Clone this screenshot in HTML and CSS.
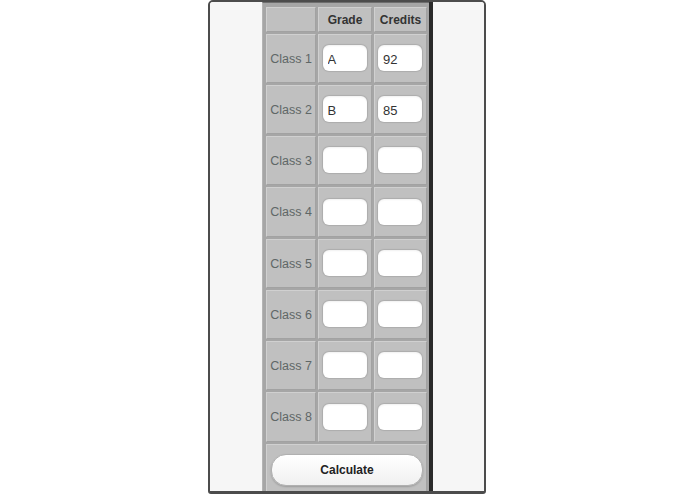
FILE: index.html
```html
<!DOCTYPE html>
<html>
<head>
<meta charset="utf-8">
<title>GPA Calculator</title>
<link rel="stylesheet" href="styles.css">
</head>
<body>
<div class="frame">
  <div class="side"></div>
  <div class="middle">
    <div class="grid">
      <div class="cell head"></div>
      <div class="cell head">Grade</div>
      <div class="cell head">Credits</div>

      <div class="cell label">Class 1</div>
      <div class="cell"><input class="field" type="text" value="A"></div>
      <div class="cell"><input class="field" type="text" value="92"></div>

      <div class="cell label">Class 2</div>
      <div class="cell"><input class="field" type="text" value="B"></div>
      <div class="cell"><input class="field" type="text" value="85"></div>

      <div class="cell label">Class 3</div>
      <div class="cell"><input class="field" type="text"></div>
      <div class="cell"><input class="field" type="text"></div>

      <div class="cell label">Class 4</div>
      <div class="cell"><input class="field" type="text"></div>
      <div class="cell"><input class="field" type="text"></div>

      <div class="cell label">Class 5</div>
      <div class="cell"><input class="field" type="text"></div>
      <div class="cell"><input class="field" type="text"></div>

      <div class="cell label">Class 6</div>
      <div class="cell"><input class="field" type="text"></div>
      <div class="cell"><input class="field" type="text"></div>

      <div class="cell label">Class 7</div>
      <div class="cell"><input class="field" type="text"></div>
      <div class="cell"><input class="field" type="text"></div>

      <div class="cell label">Class 8</div>
      <div class="cell"><input class="field" type="text"></div>
      <div class="cell"><input class="field" type="text"></div>

      <div class="cell foot"><button class="calc" type="button">Calculate</button></div>
    </div>
  </div>
  <div class="bar"></div>
  <div class="side"></div>
</div>
</body>
</html>
```
FILE: styles.css
```css
html, body {
  margin: 0;
  padding: 0;
  background: #ffffff;
  overflow: hidden;
}

body {
  font-family: "Liberation Sans", Arial, sans-serif;
}

.frame {
  margin-left: 208px;
  width: 278px;
  height: 494px;
  box-sizing: border-box;
  border: 2px solid #4c4c4c;
  border-bottom-width: 3px;
  border-radius: 5px 5px 3px 3px;
  display: flex;
  overflow: hidden;
  background: #f6f6f6;
}

.side {
  width: 52px;
  background: #f6f6f6;
}

.side:last-child {
  width: 51px;
}

.middle {
  width: 167px;
  box-sizing: border-box;
  background: #a6a6a6;
  border-top: 1px solid #6e6e6e;
  border-left: 1px solid #b4b4b4;
  padding: 4px 2px 0 3px;
}

.bar {
  width: 4px;
  background: #2a2a2a;
}

.grid {
  display: grid;
  grid-template-columns: 50px 54px 53px;
  grid-template-rows: 25px 49px 49px 49px 50px 49px 49px 49px 50px 60px;
  gap: 2px;
}

.cell {
  box-sizing: border-box;
  background: #c0c0c0;
  border: 1px solid;
  border-color: #d0d0d0 #a2a2a2 #a2a2a2 #d0d0d0;
  display: flex;
  align-items: center;
  justify-content: center;
}

.head {
  font-size: 12px;
  font-weight: bold;
  color: #333333;
  padding-top: 1px;
}

.label {
  font-size: 12.5px;
  color: #5f6767;
}

.field {
  box-sizing: border-box;
  width: 44px;
  height: 26px;
  margin: -1px 1px 0 0;
  border: none;
  border-radius: 6px;
  background: #ffffff;
  box-shadow: 0 0 1px 1px rgba(0, 0, 0, 0.1), inset 0 1px 2px rgba(0, 0, 0, 0.06);
  padding: 2px 0 0 5px;
  font-family: "Liberation Sans", Arial, sans-serif;
  font-size: 13px;
  color: #333333;
  outline: none;
}

.foot {
  grid-column: 1 / 4;
  align-items: flex-start;
  justify-content: flex-start;
  padding: 9px 3px 0 4px;
}

.calc {
  width: 152px;
  height: 32px;
  border: 1px solid #b0b0b0;
  border-radius: 15px;
  background: linear-gradient(#ffffff, #f0f0f0);
  box-shadow: 0 1px 2px rgba(0, 0, 0, 0.2);
  font-family: "Liberation Sans", Arial, sans-serif;
  font-size: 12px;
  font-weight: bold;
  color: #222222;
  padding: 0;
}
```
